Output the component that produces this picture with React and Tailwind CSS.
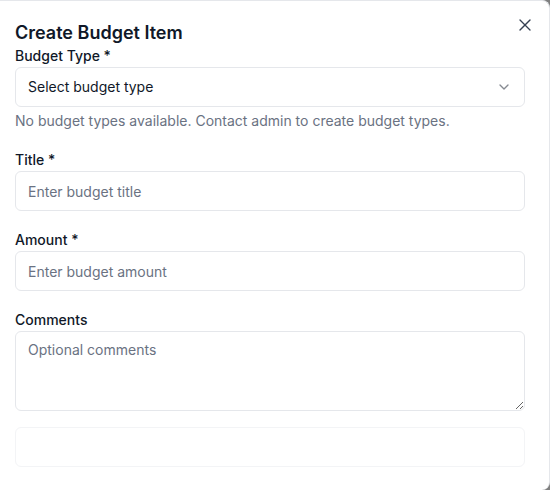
import React from "react";
import { X, ChevronDown } from "lucide-react";

const Field = ({ label, className = "", children }) => (
  <div className={className}>
    <label className="block text-sm font-medium leading-5 text-gray-900">
      {label}
    </label>
    <div className="mt-px">{children}</div>
  </div>
);

const inputCls =
  "block w-full h-10 rounded-md border border-gray-200 bg-white px-3 text-sm text-gray-900 placeholder:text-gray-500 outline-none";

export default function App() {
  return (
    <div
      className="w-[550px] h-[490px] overflow-hidden bg-[#7f7f7f]"
      style={{ fontFamily: "Inter, 'Noto Sans', sans-serif" }}
    >
      <div className="relative h-full bg-white border-t border-r border-gray-200 rounded-tr-lg rounded-br-lg pl-[15px] pr-[24px] pt-[18px]">
        <button className="absolute top-[14px] right-[14px] text-gray-700">
          <X size={20} strokeWidth={1.6} />
        </button>

        <h2 className="text-lg font-semibold leading-[28px] text-gray-900">
          Create Budget Item
        </h2>

        <Field label="Budget Type *" className="-mt-px">
          <div className="flex h-10 w-full items-center justify-between rounded-md border border-gray-200 bg-white px-3 text-sm text-gray-900">
            <span>Select budget type</span>
            <ChevronDown size={16} className="opacity-50" />
          </div>
        </Field>
        <p className="mt-1 text-sm leading-5 text-gray-500">
          No budget types available. Contact admin to create budget types.
        </p>

        <Field label="Title *" className="mt-[19px]">
          <input className={inputCls} placeholder="Enter budget title" />
        </Field>

        <Field label="Amount *" className="mt-[19px]">
          <input className={inputCls} placeholder="Enter budget amount" />
        </Field>

        <Field label="Comments" className="mt-[19px]">
          <textarea
            className="block w-full h-20 rounded-md border border-gray-200 bg-white px-3 py-2 text-sm text-gray-900 placeholder:text-gray-500 outline-none"
            placeholder="Optional comments"
          />
        </Field>

        <div className="mt-4 h-10 w-full rounded-md border border-gray-100 bg-white" />
      </div>
    </div>
  );
}
